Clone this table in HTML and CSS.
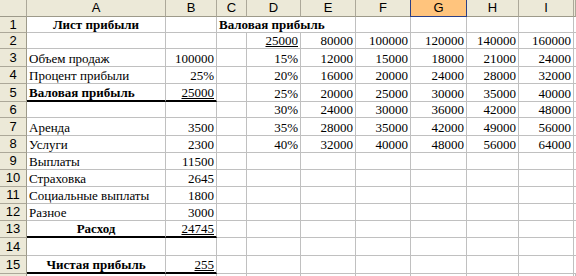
FILE: index.html
```html
<!DOCTYPE html>
<html>
<head>
<meta charset="utf-8">
<link rel="stylesheet" href="styles.css">
</head>
<body>
<div class="sheet">
  <div class="h corner"></div><div class="h">A</div><div class="h">B</div><div class="h">C</div><div class="h">D</div><div class="h">E</div><div class="h">F</div><div class="h sel">G</div><div class="h">H</div><div class="h">I</div><div class="h"></div>

  <div class="r">1</div><div class="c b ctr">Лист прибыли</div><div class="c"></div><div class="c b span3">Валовая прибыль</div><div class="c"></div><div class="c"></div><div class="c"></div><div class="c"></div><div class="c"></div>

  <div class="r">2</div><div class="c"></div><div class="c"></div><div class="c"></div><div class="c n"><span class="u">25000</span></div><div class="c n">80000</div><div class="c n">100000</div><div class="c n">120000</div><div class="c n">140000</div><div class="c n">160000</div><div class="c"></div>

  <div class="r">3</div><div class="c">Объем продаж</div><div class="c n">100000</div><div class="c"></div><div class="c n">15%</div><div class="c n">12000</div><div class="c n">15000</div><div class="c n">18000</div><div class="c n">21000</div><div class="c n">24000</div><div class="c"></div>

  <div class="r">4</div><div class="c">Процент прибыли</div><div class="c n">25%</div><div class="c"></div><div class="c n">20%</div><div class="c n">16000</div><div class="c n">20000</div><div class="c n">24000</div><div class="c n">28000</div><div class="c n">32000</div><div class="c"></div>

  <div class="r">5</div><div class="c b tb">Валовая прибыль</div><div class="c n tb"><span class="u">25000</span></div><div class="c"></div><div class="c n">25%</div><div class="c n">20000</div><div class="c n">25000</div><div class="c n">30000</div><div class="c n">35000</div><div class="c n">40000</div><div class="c"></div>

  <div class="r">6</div><div class="c"></div><div class="c"></div><div class="c"></div><div class="c n">30%</div><div class="c n">24000</div><div class="c n">30000</div><div class="c n">36000</div><div class="c n">42000</div><div class="c n">48000</div><div class="c"></div>

  <div class="r">7</div><div class="c">Аренда</div><div class="c n">3500</div><div class="c"></div><div class="c n">35%</div><div class="c n">28000</div><div class="c n">35000</div><div class="c n">42000</div><div class="c n">49000</div><div class="c n">56000</div><div class="c"></div>

  <div class="r">8</div><div class="c">Услуги</div><div class="c n">2300</div><div class="c"></div><div class="c n">40%</div><div class="c n">32000</div><div class="c n">40000</div><div class="c n">48000</div><div class="c n">56000</div><div class="c n">64000</div><div class="c"></div>

  <div class="r">9</div><div class="c">Выплаты</div><div class="c n">11500</div><div class="c"></div><div class="c"></div><div class="c"></div><div class="c"></div><div class="c"></div><div class="c"></div><div class="c"></div><div class="c"></div>

  <div class="r">10</div><div class="c">Страховка</div><div class="c n">2645</div><div class="c"></div><div class="c"></div><div class="c"></div><div class="c"></div><div class="c"></div><div class="c"></div><div class="c"></div><div class="c"></div>

  <div class="r">11</div><div class="c">Социальные выплаты</div><div class="c n">1800</div><div class="c"></div><div class="c"></div><div class="c"></div><div class="c"></div><div class="c"></div><div class="c"></div><div class="c"></div><div class="c"></div>

  <div class="r">12</div><div class="c">Разное</div><div class="c n">3000</div><div class="c"></div><div class="c"></div><div class="c"></div><div class="c"></div><div class="c"></div><div class="c"></div><div class="c"></div><div class="c"></div>

  <div class="r">13</div><div class="c b ctr tb">Расход</div><div class="c n tb"><span class="u">24745</span></div><div class="c"></div><div class="c"></div><div class="c"></div><div class="c"></div><div class="c"></div><div class="c"></div><div class="c"></div><div class="c"></div>

  <div class="r">14</div><div class="c"></div><div class="c"></div><div class="c"></div><div class="c"></div><div class="c"></div><div class="c"></div><div class="c"></div><div class="c"></div><div class="c"></div><div class="c"></div>

  <div class="r">15</div><div class="c b ctr tb">Чистая прибыль</div><div class="c n tb"><span class="u">255</span></div><div class="c"></div><div class="c"></div><div class="c"></div><div class="c"></div><div class="c"></div><div class="c"></div><div class="c"></div><div class="c"></div>

  <div class="r edge"></div><div class="c edge"></div><div class="c edge"></div><div class="c edge"></div><div class="c edge"></div><div class="c edge"></div><div class="c edge"></div><div class="c edge"></div><div class="c edge"></div><div class="c edge"></div><div class="c edge"></div>
</div>
</body>
</html>
```
FILE: styles.css
```css
html, body {
  margin: 0;
  padding: 0;
  background: #ffffff;
  overflow: hidden;
}

.sheet {
  display: grid;
  width: 576px;
  grid-template-columns: 27px 139px 51px 30px 54px 55px 55px 56px 52px 55px 2px;
  grid-template-rows: 17px 16px 16px 18px 17px 18px 16px 18px 17px 17px 17px 17px 17px 17px 18px 18px 2px;
  font-family: "Liberation Serif", "Times New Roman", serif;
  font-size: 13px;
  color: #000;
}

.sheet > div {
  box-sizing: border-box;
  min-width: 0;
  overflow: hidden;
  white-space: nowrap;
}

.h, .r {
  background: #ece9d8;
  font-family: "Liberation Sans", Arial, sans-serif;
  font-size: 13px;
  display: flex;
  align-items: center;
  justify-content: center;
  border-right: 1px solid #aca899;
  border-bottom: 1px solid #aca899;
  line-height: 14px;
}

.h {
  border-bottom-color: #9d9a8a;
}

.r {
  border-right-color: #9d9a8a;
}

.h.sel {
  background: #ffc47d;
  border-left: 1px solid #2b3f86;
  border-right: 1px solid #2b3f86;
  border-bottom: 1px solid #2b3f86;
  margin-left: -1px;
}

.c {
  border-right: 1px solid #c0c0c0;
  border-bottom: 1px solid #c0c0c0;
  display: flex;
  align-items: flex-end;
  padding: 0 2px 0 2px;
  line-height: 15px;
}

.sheet > .edge {
  border-bottom: 0;
  padding: 0;
}

.span3 {
  grid-column: span 3;
}

.n {
  justify-content: flex-end;
}

.ctr {
  justify-content: center;
}

.b {
  font-weight: bold;
}

.u {
  text-decoration: underline;
  text-underline-offset: 1px;
}

.tb {
  border-bottom: 2px solid #000;
}
```
